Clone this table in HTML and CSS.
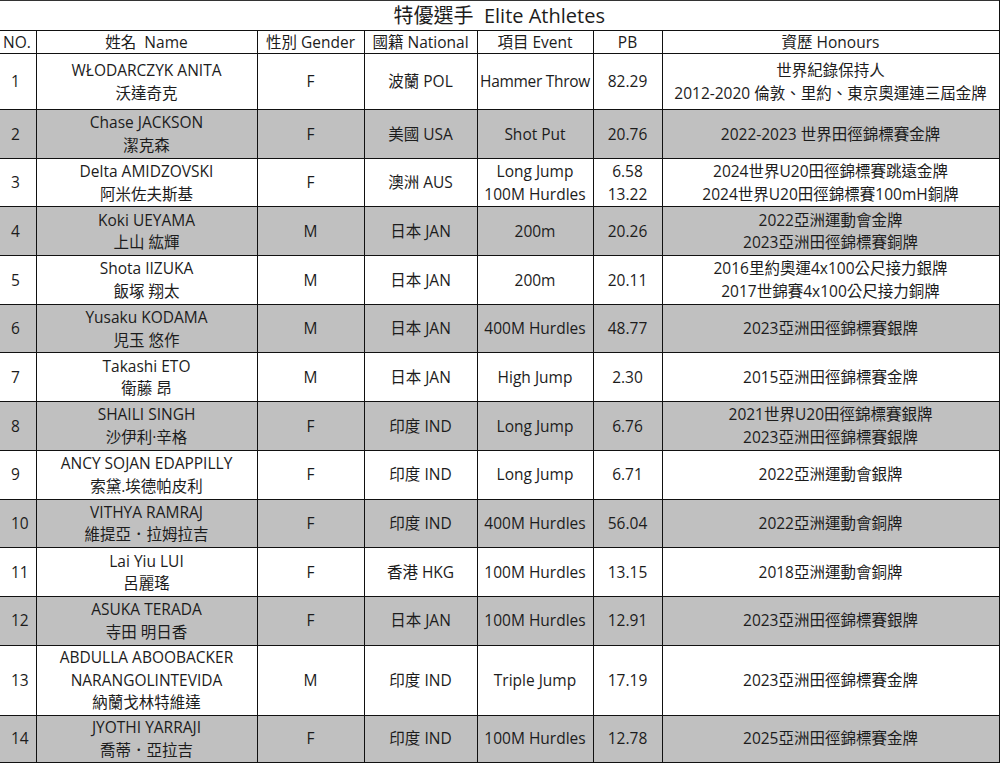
FILE: index.html
```html
<!DOCTYPE html>
<html lang="zh-Hant">
<head>
<meta charset="utf-8">
<title>特優選手 Elite Athletes</title>
<link rel="stylesheet" href="styles.css">
</head>
<body>
<table class="sheet">
  <colgroup>
    <col class="c-no"><col class="c-name"><col class="c-gender"><col class="c-nat"><col class="c-event"><col class="c-pb"><col class="c-hon">
  </colgroup>
  <thead>
    <tr class="title-row"><th colspan="7">特優選手&nbsp;&nbsp;Elite Athletes</th></tr>
    <tr class="head-row">
      <th class="no">NO.</th><th>姓名&nbsp;&nbsp;Name</th><th>性別 Gender</th><th>國籍 National</th><th>項目 Event</th><th>PB</th><th>資歷 Honours</th>
    </tr>
  </thead>
  <tbody>
    <tr class="r1">
      <td class="no">1</td><td>WŁODARCZYK ANITA<br>沃達奇克</td><td>F</td><td>波蘭 POL</td><td class="tight">Hammer Throw</td><td>82.29</td><td>世界紀錄保持人<br>2012-2020 倫敦、里約、東京奧運連三屆金牌</td>
    </tr>
    <tr class="alt">
      <td class="no">2</td><td>Chase JACKSON<br>潔克森</td><td>F</td><td>美國 USA</td><td>Shot Put</td><td>20.76</td><td>2022-2023 世界田徑錦標賽金牌</td>
    </tr>
    <tr>
      <td class="no">3</td><td>Delta AMIDZOVSKI<br>阿米佐夫斯基</td><td>F</td><td>澳洲 AUS</td><td>Long Jump<br>100M Hurdles</td><td>6.58<br>13.22</td><td>2024世界U20田徑錦標賽跳遠金牌<br>2024世界U20田徑錦標賽100mH銅牌</td>
    </tr>
    <tr class="alt">
      <td class="no">4</td><td>Koki UEYAMA<br>上山 紘輝</td><td>M</td><td>日本 JAN</td><td>200m</td><td>20.26</td><td>2022亞洲運動會金牌<br>2023亞洲田徑錦標賽銅牌</td>
    </tr>
    <tr>
      <td class="no">5</td><td>Shota IIZUKA<br>飯塚 翔太</td><td>M</td><td>日本 JAN</td><td>200m</td><td>20.11</td><td>2016里約奧運4x100公尺接力銀牌<br>2017世錦賽4x100公尺接力銅牌</td>
    </tr>
    <tr class="alt">
      <td class="no">6</td><td>Yusaku KODAMA<br>児玉 悠作</td><td>M</td><td>日本 JAN</td><td>400M Hurdles</td><td>48.77</td><td>2023亞洲田徑錦標賽銀牌</td>
    </tr>
    <tr>
      <td class="no">7</td><td>Takashi ETO<br>衛藤 昂</td><td>M</td><td>日本 JAN</td><td>High Jump</td><td>2.30</td><td>2015亞洲田徑錦標賽金牌</td>
    </tr>
    <tr class="alt">
      <td class="no">8</td><td>SHAILI SINGH<br>沙伊利·辛格</td><td>F</td><td>印度 IND</td><td>Long Jump</td><td>6.76</td><td>2021世界U20田徑錦標賽銀牌<br>2023亞洲田徑錦標賽銀牌</td>
    </tr>
    <tr>
      <td class="no">9</td><td>ANCY SOJAN EDAPPILLY<br>索黛.埃德帕皮利</td><td>F</td><td>印度 IND</td><td>Long Jump</td><td>6.71</td><td>2022亞洲運動會銀牌</td>
    </tr>
    <tr class="alt">
      <td class="no">10</td><td>VITHYA RAMRAJ<br>維提亞．拉姆拉吉</td><td>F</td><td>印度 IND</td><td>400M Hurdles</td><td>56.04</td><td>2022亞洲運動會銅牌</td>
    </tr>
    <tr>
      <td class="no">11</td><td>Lai Yiu LUI<br>呂麗瑤</td><td>F</td><td>香港 HKG</td><td>100M Hurdles</td><td>13.15</td><td>2018亞洲運動會銅牌</td>
    </tr>
    <tr class="alt">
      <td class="no">12</td><td>ASUKA TERADA<br>寺田 明日香</td><td>F</td><td>日本 JAN</td><td>100M Hurdles</td><td>12.91</td><td>2023亞洲田徑錦標賽銀牌</td>
    </tr>
    <tr class="r13">
      <td class="no">13</td><td>ABDULLA ABOOBACKER<br>NARANGOLINTEVIDA<br>納蘭戈林特維達</td><td>M</td><td>印度 IND</td><td>Triple Jump</td><td>17.19</td><td>2023亞洲田徑錦標賽金牌</td>
    </tr>
    <tr class="alt r14">
      <td class="no">14</td><td>JYOTHI YARRAJI<br>喬蒂．亞拉吉</td><td>F</td><td>印度 IND</td><td>100M Hurdles</td><td>12.78</td><td>2025亞洲田徑錦標賽金牌</td>
    </tr>
  </tbody>
</table>
</body>
</html>
```

FILE: styles.css
```css
html, body {
  margin: 0;
  padding: 0;
  background: #ffffff;
}

body {
  font-family: "Open Sans", "Noto Sans CJK TC", sans-serif;
  color: #1c1c1c;
}

.sheet {
  border-collapse: collapse;
  table-layout: fixed;
  width: 999px;
  margin: 0;
}

.c-no { width: 36px; }
.c-name { width: 221px; }
.c-gender { width: 107px; }
.c-nat { width: 113px; }
.c-event { width: 116px; }
.c-pb { width: 69px; }
.c-hon { width: 337px; }

.sheet th,
.sheet td {
  border: 1px solid #111;
  padding: 0;
  text-align: center;
  vertical-align: middle;
  font-weight: normal;
  font-size: 15.5px;
  line-height: 22.5px;
  white-space: nowrap;
  overflow: hidden;
}

.sheet th:first-child,
.sheet td:first-child {
  border-left: none;
}

.title-row th {
  height: 29px;
  font-size: 20px;
  line-height: 28px;
  border-top: 1px solid #333;
}

.head-row th {
  height: 22px;
  line-height: 22px;
}

.sheet .no {
  text-align: left;
  padding-left: 3px;
}

.sheet td.no {
  padding-left: 11px;
}

.sheet tbody tr td {
  height: 47.7px;
}

.sheet tbody tr.r1 td { height: 55px; }
.sheet tbody tr.r13 td { height: 69px; }
.sheet tbody tr.r14 td { height: 46px; }

.alt td {
  background: #c0c0c0;
}

.tight {
  letter-spacing: -0.3px;
}
```
